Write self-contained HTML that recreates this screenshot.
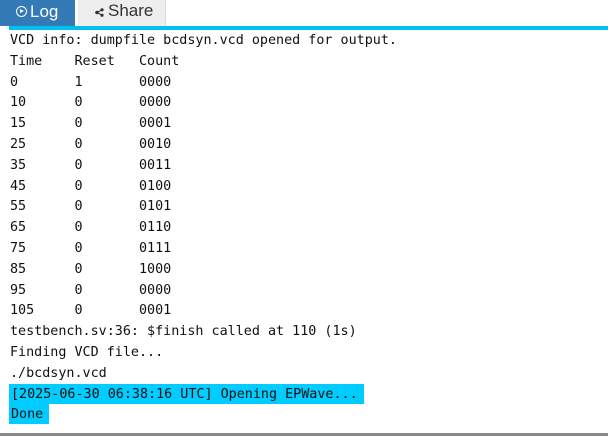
<!DOCTYPE html>
<html><head><style>
html,body{margin:0;padding:0;width:608px;height:436px;overflow:hidden;background:#fff;position:relative}
.tab{position:absolute;top:0;height:26px;font-family:"Liberation Sans",sans-serif;font-size:17px;line-height:24px}
#log{left:0;width:75px;background:#337ab7;color:#fff;}
#share{left:78px;width:87px;background:#eee;color:#333;border-right:1px solid #ddd}
.bar{position:absolute;left:9px;right:0;top:26px;height:4px;background:#00c0ef}
pre{position:absolute;left:10px;top:31px;margin:0;font-family:"DejaVu Sans Mono","Liberation Mono",monospace;font-size:13.4px;line-height:20.8px;color:#111}
.hl{background:#00ccff;padding:3px 6px 2px 2px;margin-left:-1px}
.bottom{position:absolute;left:0;right:0;bottom:0;height:3px;background:#888}
</style></head><body>
<div class="tab" id="log"><span style="position:absolute;left:16px;top:6px;width:11px;height:11px;border:1.5px solid #fff;border-radius:50%;box-sizing:border-box"></span><span style="position:absolute;left:20px;top:9px;width:0;height:0;border-left:4px solid #fff;border-top:2.5px solid transparent;border-bottom:2.5px solid transparent"></span><span style="position:absolute;left:30px;top:0">Log</span></div>
<div class="tab" id="share"><svg style="position:absolute;left:17px;top:8px" width="9" height="9" viewBox="0 0 9 9"><circle cx="2" cy="4.5" r="1.8" fill="#333"/><circle cx="7" cy="1.8" r="1.6" fill="#333"/><circle cx="7" cy="7.2" r="1.6" fill="#333"/><path d="M2 4.5L7 1.8M2 4.5L7 7.2" stroke="#333" stroke-width="1"/></svg><span style="position:absolute;left:30px;top:-1px">Share</span></div>
<div class="bar"></div>
<pre>VCD info: dumpfile bcdsyn.vcd opened for output.
Time    Reset   Count
0       1       0000
10      0       0000
15      0       0001
25      0       0010
35      0       0011
45      0       0100
55      0       0101
65      0       0110
75      0       0111
85      0       1000
95      0       0000
105     0       0001
testbench.sv:36: $finish called at 110 (1s)
Finding VCD file...
./bcdsyn.vcd
<span class="hl">[2025-06-30 06:38:16 UTC] Opening EPWave...</span>
<span class="hl">Done</span></pre>
<div class="bottom"></div>
</body></html>
